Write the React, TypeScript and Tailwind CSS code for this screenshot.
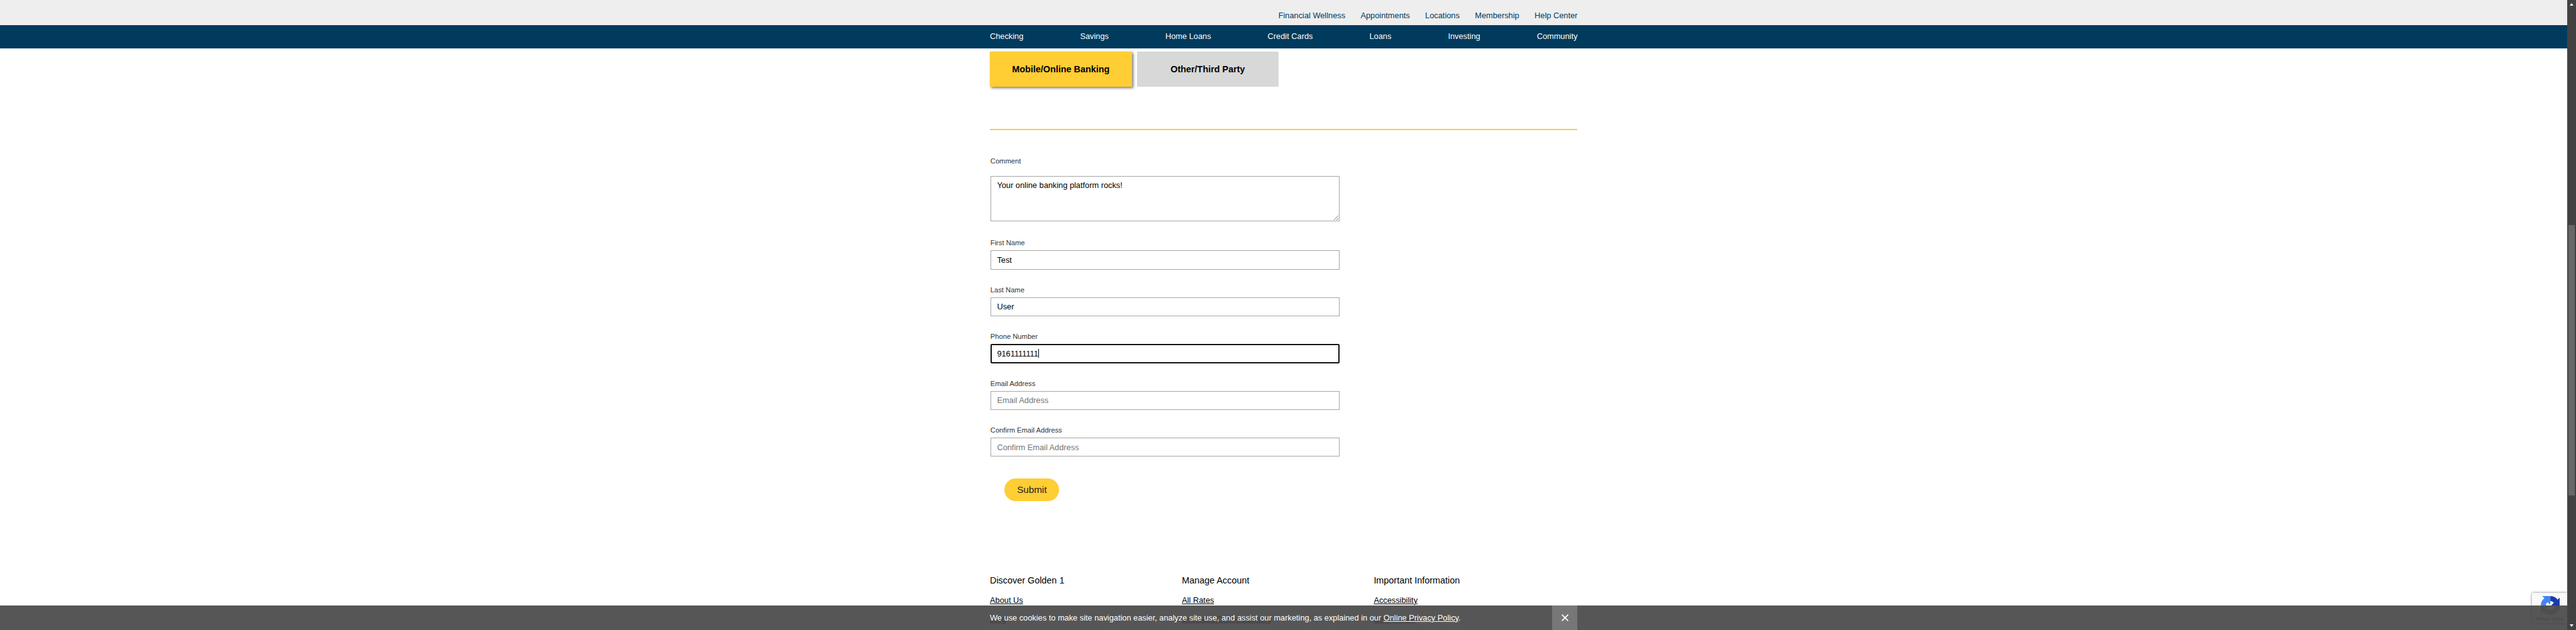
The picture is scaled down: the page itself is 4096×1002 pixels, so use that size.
import React from "react";

const utility = ["Financial Wellness", "Appointments", "Locations", "Membership", "Help Center"];
const nav = ["Checking", "Savings", "Home Loans", "Credit Cards", "Loans", "Investing", "Community"];
const columns = [
  { title: "Discover Golden 1", links: ["About Us", "Blog"] },
  { title: "Manage Account", links: ["All Rates", "Business Online Banking"] },
  { title: "Important Information", links: ["Accessibility", "Disclosures"] },
];

const container = "mx-auto w-[934.4px]";

function Label({ children }: { children: React.ReactNode }) {
  return <div className="h-[16px] pl-[0.8px] text-[11.2px] leading-[17.4px] text-[#333]">{children}</div>;
}

function Field({ label, value, placeholder, focused }: { label: string; value?: string; placeholder?: string; focused?: boolean }) {
  return (
    <div className="mb-[24px] h-[50.4px]">
      <Label>{label}</Label>
      <div
        className={
          focused
            ? "mt-[4px] ml-[0.8px] flex h-[30.4px] w-[555.2px] items-center rounded-[2px] border-2 border-[#101010] pl-[8.6px] text-[12.8px] text-black"
            : "mt-[4px] ml-[0.8px] flex h-[30.4px] w-[555.2px] items-center border border-[#a6a6a6] pl-[9.6px] text-[12.8px] text-black"
        }
      >
        {value ? <span>{value}</span> : <span className="text-[#757575]">{placeholder}</span>}
        {focused && <span className="h-[14px] w-px bg-black" />}
      </div>
    </div>
  );
}

function Recaptcha() {
  return (
    <div className="absolute top-[943.2px] right-0 h-[48px] w-[56px] rounded-l-[2px] bg-[#f9f9f9] shadow-[0_0_4px_#808080]">
      <svg className="absolute top-[4.4px] left-[13.2px] h-[30.4px] w-[30.4px]" viewBox="0 0 64 64">
        <path d="M64 31.96V4.57l-7.57 7.57A32 32 0 0 0 31.95 0v17l.1.1c4.7 0 8.9 2.3 11.5 5.8l-9 9z" fill="#1c3aa9" />
        <path d="M31.86 0H4.47l7.57 7.57A32 32 0 0 0 0 32.05h17c0-4.8 2.3-9 5.8-11.6l9.06 9.06z" fill="#4285f4" />
        <path d="M0 32.05v27.4l7.57-7.57A32 32 0 0 0 64 32l-17-.1c0 8.2-6.7 15.1-15 15.1-4.8 0-8.9-2.3-11.5-5.9l9.05-9.05z" fill="#ababab" />
      </svg>
      <div className="absolute top-[36.6px] left-[6px] text-[6.4px] leading-[10px] whitespace-nowrap text-[#555] [font-family:Roboto,sans-serif]">
        Privacy - Terms
      </div>
    </div>
  );
}

export default function App() {
  return (
    <div className="flex h-screen w-full overflow-hidden bg-white font-['Liberation_Sans',Arial,sans-serif]">
      <div className="relative min-w-0 flex-1 overflow-hidden">
        <header>
          <div className="h-[40px] bg-[#eee]">
            <div className={`${container} flex justify-end gap-[24.4px] pt-[16.6px] text-[12.8px] leading-[16px] text-[#003a5d]`}>
              {utility.map((t) => (
                <a key={t}>{t}</a>
              ))}
            </div>
          </div>
          <div className="h-[36.8px] bg-[#003a5d]">
            <div className={`${container} flex justify-between pt-[9.6px] text-[12.8px] leading-[16px] text-white`}>
              {nav.map((t) => (
                <a key={t}>{t}</a>
              ))}
            </div>
          </div>
        </header>

        <main className={`${container} h-[837.4px]`}>
          <div className="flex gap-[8px] pt-[5.6px] text-[14.4px] font-bold text-black">
            <div className="flex h-[56px] w-[225.6px] items-center justify-center bg-[#ffcd34] shadow-[2px_2px_4px_#777]">Mobile/Online Banking</div>
            <div className="flex h-[56px] w-[225.6px] items-center justify-center bg-[#d8d8d8]">Other/Third Party</div>
          </div>
          <div className="mt-[66.4px] h-[2.4px] bg-[#ffcd34]" />
          <div className="mt-[40.4px]">
            <Label>Comment</Label>
            <div className="relative mt-[16.4px] ml-[0.8px] h-[72px] w-[555.2px] border border-[#a6a6a6] pt-[6.4px] pl-[9.6px] text-[12.8px] leading-[16px] text-black">
              Your online banking platform rocks!
              <svg className="absolute right-px bottom-px h-[7px] w-[7px]" viewBox="0 0 7 7" stroke="#555" strokeWidth="0.8">
                <path d="M0 7L7 0M4 7L7 4" />
              </svg>
            </div>
          </div>
          <div className="mt-[26.4px]">
            <Field label="First Name" value="Test" />
            <Field label="Last Name" value="User" />
            <Field label="Phone Number" value="9161111111" focused />
            <Field label="Email Address" placeholder="Email Address" />
            <Field label="Confirm Email Address" placeholder="Confirm Email Address" />
          </div>
          <button className="mt-[35.2px] ml-[23.2px] flex h-[36px] w-[87.2px] items-center justify-center rounded-full bg-[#ffcd34] text-[15.2px] text-[#222]">
            Submit
          </button>
        </main>

        <footer className={`${container} flex text-black`}>
          {columns.map((c) => (
            <div key={c.title} className="w-[305.2px]">
              <div className="text-[14.4px] leading-[18px]">{c.title}</div>
              {c.links.map((l) => (
                <div key={l} className="mt-[14.4px] text-[12.8px] leading-[16px] underline">
                  {l}
                </div>
              ))}
            </div>
          ))}
        </footer>

        <Recaptcha />

        <div className="absolute inset-x-0 bottom-0 h-[38.8px] bg-[#444]/90">
          <div className={`${container} flex h-full justify-between text-[12.8px] leading-[16px] text-white`}>
            <p className="pt-[11.4px]">
              We use cookies to make site navigation easier, analyze site use, and assist our marketing, as explained in our{" "}
              <a className="underline">Online Privacy Policy</a>.
            </p>
            <div className="flex h-full w-[40px] items-center justify-center bg-[#777]">
              <svg className="h-[11px] w-[11px]" viewBox="0 0 11 11" stroke="white" strokeWidth="1.7">
                <path d="M0.5 0.5L10.5 10.5M10.5 0.5L0.5 10.5" />
              </svg>
            </div>
          </div>
        </div>
      </div>

      <div className="flex h-full w-[13.6px] shrink-0 flex-col items-center bg-[#424242]">
        <svg className="mt-[5.2px] h-[4px] w-[6px]" viewBox="0 0 6 4" fill="white">
          <path d="M0 4L3 0L6 4Z" />
        </svg>
        <div className="mt-[349px] h-[430px] w-[10.4px] bg-[#686868]" />
        <svg className="mt-auto mb-[5px] h-[4px] w-[6px]" viewBox="0 0 6 4" fill="white">
          <path d="M0 0H6L3 4Z" />
        </svg>
      </div>
    </div>
  );
}
